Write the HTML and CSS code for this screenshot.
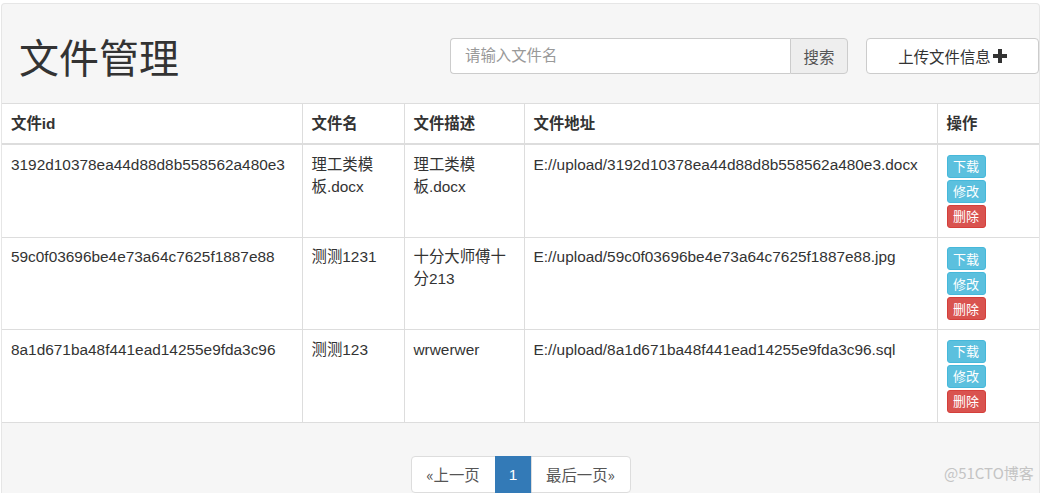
FILE: index.html
```html
<!DOCTYPE html>
<html lang="zh-CN">
<head>
<meta charset="utf-8">
<title>文件管理</title>
<link rel="stylesheet" href="styles.css">
</head>
<body>
<div class="panel">
  <div class="header">
    <h1 class="title">文件管理</h1>
    <div class="search-group">
      <input class="search-input" type="text" placeholder="请输入文件名">
      <button class="search-btn">搜索</button>
    </div>
    <button class="upload-btn">上传文件信息<svg class="plus" width="14" height="14" viewBox="0 0 14 14"><path d="M5 0h4v5h5v4H9v5H5V9H0V5h5z" fill="#333"/></svg></button>
  </div>
  <table class="files">
    <colgroup>
      <col class="c-id">
      <col class="c-name">
      <col class="c-desc">
      <col class="c-path">
      <col class="c-op">
    </colgroup>
    <thead>
      <tr>
        <th>文件id</th>
        <th>文件名</th>
        <th>文件描述</th>
        <th>文件地址</th>
        <th>操作</th>
      </tr>
    </thead>
    <tbody>
      <tr>
        <td>3192d10378ea44d88d8b558562a480e3</td>
        <td>理工类模板.docx</td>
        <td>理工类模板.docx</td>
        <td>E://upload/3192d10378ea44d88d8b558562a480e3.docx</td>
        <td><div class="ops"><button class="btn-xs info">下载</button><button class="btn-xs info">修改</button><button class="btn-xs danger">删除</button></div></td>
      </tr>
      <tr>
        <td>59c0f03696be4e73a64c7625f1887e88</td>
        <td>测测1231</td>
        <td>十分大师傅十分213</td>
        <td>E://upload/59c0f03696be4e73a64c7625f1887e88.jpg</td>
        <td><div class="ops"><button class="btn-xs info">下载</button><button class="btn-xs info">修改</button><button class="btn-xs danger">删除</button></div></td>
      </tr>
      <tr>
        <td>8a1d671ba48f441ead14255e9fda3c96</td>
        <td>测测123</td>
        <td>wrwerwer</td>
        <td>E://upload/8a1d671ba48f441ead14255e9fda3c96.sql</td>
        <td><div class="ops"><button class="btn-xs info">下载</button><button class="btn-xs info">修改</button><button class="btn-xs danger">删除</button></div></td>
      </tr>
    </tbody>
  </table>
  <div class="pager-wrap">
    <ul class="pager">
      <li class="page">«上一页</li>
      <li class="page active">1</li>
      <li class="page">最后一页»</li>
    </ul>
  </div>
</div>
<div class="watermark">@51CTO博客</div>
</body>
</html>
```
FILE: styles.css
```css
html, body {
  margin: 0;
  padding: 0;
  background: #ffffff;
  font-family: "Liberation Sans", "Noto Sans CJK SC", sans-serif;
  color: #333333;
  font-size: 15.4px;
}

.panel {
  margin: 3px 0 0 1px;
  width: 1037px;
  height: 560px;
  background: #f6f6f6;
  border: 1px solid #e6e6e6;
  border-bottom: none;
  border-radius: 4px 4px 0 0;
}

.header {
  display: flex;
  align-items: center;
  height: 94px;
  padding-top: 5px;
}

.title {
  margin: 0 0 0 17px;
  font-family: "Noto Sans CJK SC", "Liberation Sans", sans-serif;
  font-weight: 400;
  font-size: 40px;
  line-height: 1;
  color: #333;
  flex: 1;
}

.search-group {
  display: flex;
  width: 398px;
  height: 36px;
  margin-right: 18px;
}

.search-input {
  flex: 1;
  box-sizing: border-box;
  height: 36px;
  border: 1px solid #cccccc;
  border-right: none;
  border-radius: 4px 0 0 4px;
  padding: 0 14px;
  font-family: "Liberation Sans", "Noto Sans CJK SC", sans-serif;
  font-size: 15.4px;
  color: #555;
  background: #fff;
  outline: none;
}

.search-input::placeholder {
  color: #999;
}

.search-btn {
  width: 58px;
  height: 36px;
  box-sizing: border-box;
  border: 1px solid #cccccc;
  border-radius: 0 4px 4px 0;
  background: #eeeeee;
  color: #555;
  font-family: "Noto Sans CJK SC", sans-serif;
  font-size: 15.4px;
  padding: 0;
}

.upload-btn {
  width: 173px;
  height: 36px;
  box-sizing: border-box;
  border: 1px solid #cccccc;
  border-radius: 4px;
  background: #ffffff;
  color: #333;
  font-family: "Noto Sans CJK SC", sans-serif;
  font-size: 15.4px;
  display: flex;
  align-items: center;
  justify-content: center;
  gap: 2px;
  padding: 0;
}

.plus {
  display: block;
}

.files {
  width: 1037px;
  border-collapse: collapse;
  background: #ffffff;
  table-layout: fixed;
}

.c-id { width: 300px; }
.c-name { width: 102px; }
.c-desc { width: 120px; }
.c-path { width: 413px; }
.c-op { width: 102px; }

.files th,
.files td {
  border: 1px solid #dddddd;
  padding: 8.8px 9px;
  text-align: left;
  vertical-align: top;
  line-height: 22px;
  font-size: 15.4px;
}

.files tr > :first-child { border-left: none; }
.files tr > :last-child { border-right: none; }

.files th {
  font-weight: 700;
  border-bottom-width: 2px;
  padding-top: 9px;
  padding-bottom: 8px;
}

.files td {
  height: 73px;
}

.ops {
  display: flex;
  flex-direction: column;
  align-items: flex-start;
  gap: 2px;
  padding-top: 1px;
}

.btn-xs {
  width: 39px;
  height: 23px;
  box-sizing: border-box;
  border: 1px solid transparent;
  border-radius: 3px;
  padding: 0;
  font-family: "Noto Sans CJK SC", sans-serif;
  font-size: 13px;
  line-height: 20px;
  color: #ffffff;
}

.info {
  background: #5bc0de;
  border-color: #46b8da;
}

.danger {
  background: #d9534f;
  border-color: #d43f3a;
}

.pager-wrap {
  display: flex;
  justify-content: center;
  padding-top: 33px;
}

.pager {
  display: flex;
  list-style: none;
  margin: 0;
  padding: 0;
}

.page {
  height: 37px;
  box-sizing: border-box;
  border: 1px solid #dddddd;
  margin-left: -1px;
  background: #fff;
  color: #555;
  font-family: "Noto Sans CJK SC", "Liberation Sans", sans-serif;
  font-size: 15.4px;
  line-height: 35px;
  padding: 0 13px;
}

.page:first-child {
  border-radius: 4px 0 0 4px;
  margin-left: 0;
  width: 85px;
  text-align: center;
  padding: 0;
}

.page:last-child {
  border-radius: 0 4px 4px 0;
  width: 100px;
  text-align: center;
  padding: 0;
}

.page.active {
  background: #337ab7;
  border-color: #337ab7;
  color: #fff;
  width: 37px;
  padding: 0;
  text-align: center;
  font-family: "Liberation Sans", sans-serif;
}

.watermark {
  position: absolute;
  left: 944px;
  top: 462px;
  font-family: "Noto Sans CJK SC", "Liberation Sans", sans-serif;
  font-size: 15px;
  color: #c4c4c4;
}
```
